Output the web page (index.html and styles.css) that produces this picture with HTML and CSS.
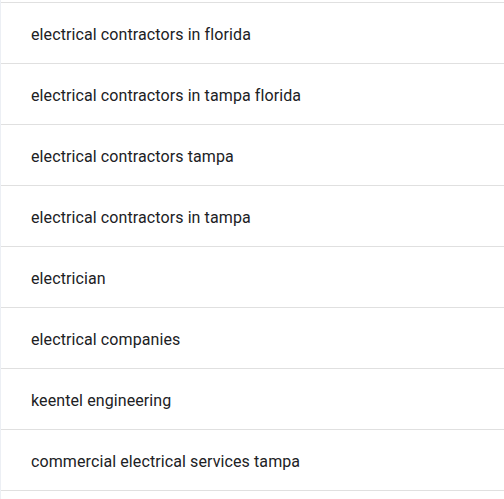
FILE: index.html
```html
<!DOCTYPE html>
<html>
<head>
<meta charset="utf-8">
<link rel="stylesheet" href="styles.css">
</head>
<body>
<div class="list">
  <div class="row">electrical contractors in florida</div>
  <div class="row">electrical contractors in tampa florida</div>
  <div class="row">electrical contractors tampa</div>
  <div class="row">electrical contractors in tampa</div>
  <div class="row">electrician</div>
  <div class="row">electrical companies</div>
  <div class="row">keentel engineering</div>
  <div class="row">commercial electrical services tampa</div>
</div>
</body>
</html>
```
FILE: styles.css
```css
html, body {
  margin: 0;
  padding: 0;
  background: #ffffff;
}
body {
  height: 499px;
  overflow: hidden;
}
.list {
  padding-top: 2px;
  border-left: 1px solid #eceff4;
  min-height: 497px;
  font-family: Roboto, "Noto Sans", sans-serif;
}
.row {
  border-top: 1px solid #e0e0e0;
  padding-left: 30px;
  display: flex;
  align-items: center;
  padding-top: 3px;
  box-sizing: border-box;
  height: 61px;
  font-size: 16px;
  line-height: 20px;
  letter-spacing: 0.1px;
  color: #202124;
}
.row:last-child {
  border-bottom: 1px solid #e0e0e0;
  height: 62px;
}
```
